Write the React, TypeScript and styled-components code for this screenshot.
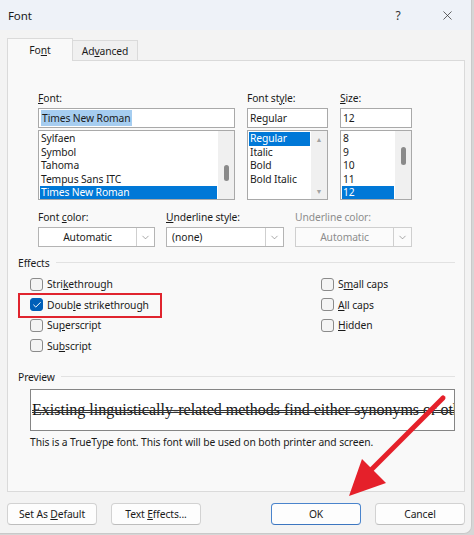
import React from 'react'
import styled, { createGlobalStyle, css } from 'styled-components'
import { X, ChevronDown, Check } from 'lucide-react'

const fontNames = ['Sylfaen', 'Symbol', 'Tahoma', 'Tempus Sans ITC', 'Times New Roman']
const fontStyles = ['Regular', 'Italic', 'Bold', 'Bold Italic']
const fontSizes = ['8', '9', '10', '11', '12']

const App = () => {
  return (
    <>
      <GlobalStyle />
      <StWindow>
        {/* // Title bar */}
        <StTitleBar>
          <StTitle>Font</StTitle>
          <StHelpButton>?</StHelpButton>
          <StCloseButton>
            <X size={15} strokeWidth={1.2} />
          </StCloseButton>
        </StTitleBar>

        {/* // Tabs */}
        <StTabStrip>
          <StTab $active>
            Fo<u>n</u>t
          </StTab>
          <StTab>
            Ad<u>v</u>anced
          </StTab>
        </StTabStrip>

        <StPanel>
          {/* // Font / style / size pickers */}
          <StPickerRow>
            <StColumn $width={197}>
              <StFieldLabel>
                <u>F</u>ont:
              </StFieldLabel>
              <StTextBox>
                <StSelection>Times New Roman</StSelection>
              </StTextBox>
              <StListBox>
                <StListItems>
                  {fontNames.map((name) => (
                    <StListItem key={name} $selected={name === 'Times New Roman'}>
                      {name}
                    </StListItem>
                  ))}
                </StListItems>
                <StScrollTrack>
                  <StThumb $offset={34} $length={16} />
                </StScrollTrack>
              </StListBox>
            </StColumn>

            <StColumn $width={81}>
              <StFieldLabel>
                Font st<u>y</u>le:
              </StFieldLabel>
              <StTextBox>Regular</StTextBox>
              <StListBox>
                <StListItems>
                  {fontStyles.map((name) => (
                    <StListItem key={name} $selected={name === 'Regular'}>
                      {name}
                    </StListItem>
                  ))}
                </StListItems>
                <StScrollTrack $arrows>
                  <StArrowGlyph>▲</StArrowGlyph>
                  <StArrowGlyph>▼</StArrowGlyph>
                </StScrollTrack>
              </StListBox>
            </StColumn>

            <StColumn $width={72}>
              <StFieldLabel>
                <u>S</u>ize:
              </StFieldLabel>
              <StTextBox>12</StTextBox>
              <StListBox>
                <StListItems>
                  {fontSizes.map((size) => (
                    <StListItem key={size} $selected={size === '12'}>
                      {size}
                    </StListItem>
                  ))}
                </StListItems>
                <StScrollTrack>
                  <StThumb $offset={16} $length={18} />
                </StScrollTrack>
              </StListBox>
            </StColumn>
          </StPickerRow>

          {/* // Colour / underline dropdowns */}
          <StDropdownRow>
            <StColumn $width={117}>
              <StFieldLabel>
                Font <u>c</u>olor:
              </StFieldLabel>
              <StDropdown>
                <StDropdownValue $center>Automatic</StDropdownValue>
                <StDropdownArrow>
                  <ChevronDown size={11} strokeWidth={1.3} />
                </StDropdownArrow>
              </StDropdown>
            </StColumn>
            <StColumn $width={118}>
              <StFieldLabel>
                <u>U</u>nderline style:
              </StFieldLabel>
              <StDropdown>
                <StDropdownValue>(none)</StDropdownValue>
                <StDropdownArrow>
                  <ChevronDown size={11} strokeWidth={1.3} />
                </StDropdownArrow>
              </StDropdown>
            </StColumn>
            <StColumn $width={117}>
              <StFieldLabel $disabled>Underline color:</StFieldLabel>
              <StDropdown $disabled>
                <StDropdownValue $center>Automatic</StDropdownValue>
                <StDropdownArrow>
                  <ChevronDown size={11} strokeWidth={1.3} />
                </StDropdownArrow>
              </StDropdown>
            </StColumn>
          </StDropdownRow>

          {/* // Effects */}
          <StGroupHeader>
            Effects
            <StGroupRule />
          </StGroupHeader>
          <StEffectsBody>
            <StEffectsColumn $width={291}>
              <StCheckRow>
                <StCheckBox />
                <span>
                  Stri<u>k</u>ethrough
                </span>
              </StCheckRow>
              <StCheckRow $marked>
                <StCheckBox $checked>
                  <Check size={10} strokeWidth={2.4} color="#ffffff" />
                </StCheckBox>
                <span>
                  Doub<u>l</u>e strikethrough
                </span>
              </StCheckRow>
              <StCheckRow>
                <StCheckBox />
                <span>
                  Su<u>p</u>erscript
                </span>
              </StCheckRow>
              <StCheckRow>
                <StCheckBox />
                <span>
                  Su<u>b</u>script
                </span>
              </StCheckRow>
            </StEffectsColumn>
            <StEffectsColumn>
              <StCheckRow>
                <StCheckBox />
                <span>
                  S<u>m</u>all caps
                </span>
              </StCheckRow>
              <StCheckRow>
                <StCheckBox />
                <span>
                  <u>A</u>ll caps
                </span>
              </StCheckRow>
              <StCheckRow>
                <StCheckBox />
                <span>
                  <u>H</u>idden
                </span>
              </StCheckRow>
            </StEffectsColumn>
          </StEffectsBody>

          {/* // Preview */}
          <StGroupHeader $spaced>
            Preview
            <StGroupRule />
          </StGroupHeader>
          <StPreviewBox>
            <StPreviewText>
              Existing linguistically-related methods find either synonyms or other related words
            </StPreviewText>
          </StPreviewBox>
          <StInfoText>
            This is a TrueType font. This font will be used on both printer and screen.
          </StInfoText>
        </StPanel>

        {/* // Buttons */}
        <StButtonBar>
          <StDialogButton>
            Set As <u>D</u>efault
          </StDialogButton>
          <StDialogButton>
            Text <u>E</u>ffects...
          </StDialogButton>
          <StSpacer />
          <StDialogButton $primary>OK</StDialogButton>
          <StDialogButton>Cancel</StDialogButton>
        </StButtonBar>

        {/* // Annotation arrow */}
        <StArrowOverlay viewBox="0 0 474 535" width={474} height={535}>
          <line x1={443} y1={398} x2={372} y2={469} stroke="#e5202a" strokeWidth={5} strokeLinecap="round" />
          <polygon points="349,496 362,459 386,483" fill="#e5202a" />
        </StArrowOverlay>
      </StWindow>
    </>
  )
}

const GlobalStyle = createGlobalStyle`
  html, body {
    margin: 0;
    padding: 0;
    background: #d6d6d6;
  }
  body {
    font-family: "Noto Sans", "Open Sans", sans-serif;
    font-size: 10.3px;
    letter-spacing: -0.1px;
    color: #1b1b1b;
  }
  u {
    text-underline-offset: 1px;
  }
`

// Window
const StWindow = styled.div`
  position: relative;
  width: 471px;
  height: 533px;
  background: #f3f3f3;
  border-right: 1px solid #c9c9c9;
  border-bottom: 1px solid #c9c9c9;
  border-bottom-right-radius: 8px;
  overflow: hidden;
`

// Title bar
const StTitleBar = styled.div`
  display: flex;
  align-items: center;
  height: 30px;
  padding-left: 8px;
  background: #eef2f8;
`
const StTitle = styled.span`
  flex: 1;
  font-size: 11.5px;
  color: #1a1a1a;
`
const StHelpButton = styled.div`
  width: 40px;
  margin-right: 5px;
  text-align: center;
  font-size: 12px;
  color: #333;
`
const StCloseButton = styled.div`
  display: flex;
  align-items: center;
  justify-content: center;
  width: 48px;
  height: 30px;
  color: #333;
`

// Tabs
const StTabStrip = styled.div`
  display: flex;
  align-items: flex-end;
  height: 22px;
  margin-top: 8px;
  padding-left: 7px;
`
const StTab = styled.div<{ $active?: boolean }>`
  position: relative;
  display: flex;
  align-items: center;
  justify-content: center;
  box-sizing: border-box;
  border: 1px solid #dadada;
  border-bottom: none;
  ${({ $active }) =>
    $active
      ? css`
          width: 66px;
          height: 23px;
          margin-bottom: -1px;
          background: #f9f9f9;
          z-index: 1;
        `
      : css`
          width: 65px;
          height: 20px;
          border-left: none;
          background: #f0f0f0;
        `}
`

// Panel
const StPanel = styled.div`
  box-sizing: border-box;
  width: 458px;
  height: 432px;
  margin-left: 7px;
  padding-top: 30px;
  background: #f9f9f9;
  border: 1px solid #dadada;
`

// Pickers
const StPickerRow = styled.div`
  display: flex;
  gap: 12px;
  padding-left: 30px;
`
const StColumn = styled.div<{ $width: number }>`
  display: flex;
  flex-direction: column;
  width: ${({ $width }) => $width}px;
`
const StFieldLabel = styled.div<{ $disabled?: boolean }>`
  height: 16px;
  line-height: 15px;
  margin-bottom: 1px;
  color: ${({ $disabled }) => ($disabled ? '#8d8d8d' : '#1b1b1b')};
`
const StTextBox = styled.div`
  box-sizing: border-box;
  height: 20px;
  margin-bottom: 2px;
  padding-left: 2px;
  line-height: 18px;
  background: #ffffff;
  border: 1px solid #a9a9a9;
`
const StSelection = styled.span`
  padding: 1px 1px;
  background: #a6cdf0;
`
const StListBox = styled.div`
  display: flex;
  box-sizing: border-box;
  height: 70px;
  background: #ffffff;
  border: 1px solid #a9a9a9;
  overflow: hidden;
`
const StListItems = styled.div`
  flex: 1;
  padding: 1px 1px 0;
`
const StListItem = styled.div<{ $selected?: boolean }>`
  height: 13.5px;
  line-height: 13.5px;
  padding-left: 1px;
  white-space: nowrap;
  ${({ $selected }) =>
    $selected &&
    css`
      background: #0078d7;
      color: #ffffff;
    `}
`
const StScrollTrack = styled.div<{ $arrows?: boolean }>`
  display: flex;
  flex-direction: column;
  align-items: center;
  justify-content: ${({ $arrows }) => ($arrows ? 'space-between' : 'flex-start')};
  width: 16px;
  padding: ${({ $arrows }) => ($arrows ? '5px 0 3px' : '0')};
  box-sizing: border-box;
  background: #f0f0f0;
`
const StThumb = styled.div<{ $offset: number; $length: number }>`
  width: 5px;
  height: ${({ $length }) => $length}px;
  margin-top: ${({ $offset }) => $offset}px;
  border-radius: 3px;
  background: #8a8a8a;
`
const StArrowGlyph = styled.span`
  font-size: 7px;
  line-height: 8px;
  color: #a3a3a3;
`

// Dropdowns
const StDropdownRow = styled.div`
  display: flex;
  gap: 11px;
  margin-top: 10px;
  padding-left: 30px;
`
const StDropdown = styled.div<{ $disabled?: boolean }>`
  display: flex;
  box-sizing: border-box;
  height: 20px;
  background: ${({ $disabled }) => ($disabled ? '#fbfbfb' : '#ffffff')};
  border: 1px solid ${({ $disabled }) => ($disabled ? '#cfcfcf' : '#b4b4b4')};
  color: ${({ $disabled }) => ($disabled ? '#8d8d8d' : '#1b1b1b')};
`
const StDropdownValue = styled.div<{ $center?: boolean }>`
  flex: 1;
  line-height: 18px;
  padding-left: ${({ $center }) => ($center ? '0' : '5px')};
  text-align: ${({ $center }) => ($center ? 'center' : 'left')};
`
const StDropdownArrow = styled.div`
  display: flex;
  align-items: center;
  justify-content: center;
  width: 17px;
  border-left: 1px solid #cfcfcf;
  color: #707070;
`

// Group sections
const StGroupHeader = styled.div<{ $spaced?: boolean }>`
  display: flex;
  align-items: center;
  gap: 6px;
  height: 15px;
  margin-top: ${({ $spaced }) => ($spaced ? '13px' : '8px')};
  padding: 0 9px 0 10px;
`
const StGroupRule = styled.div`
  flex: 1;
  height: 1px;
  background: #e2e2e2;
`
const StEffectsBody = styled.div`
  display: flex;
  margin-top: 4px;
  padding-left: 22px;
`
const StEffectsColumn = styled.div<{ $width?: number }>`
  display: flex;
  flex-direction: column;
  width: ${({ $width }) => ($width ? `${$width}px` : 'auto')};
`
const StCheckRow = styled.div<{ $marked?: boolean }>`
  position: relative;
  display: flex;
  align-items: center;
  gap: 4px;
  height: 20.5px;
  white-space: nowrap;
  ${({ $marked }) =>
    $marked &&
    css`
      &::after {
        content: '';
        position: absolute;
        left: -12px;
        top: -2px;
        width: 144px;
        height: 25px;
        box-sizing: border-box;
        border: 2px solid #e0242e;
      }
    `}
`
const StCheckBox = styled.div<{ $checked?: boolean }>`
  display: flex;
  align-items: center;
  justify-content: center;
  box-sizing: border-box;
  width: 13px;
  height: 13px;
  border-radius: 3px;
  ${({ $checked }) =>
    $checked
      ? css`
          background: #005fb8;
          border: 1px solid #005fb8;
        `
      : css`
          background: #f4f4f4;
          border: 1px solid #8b8b8b;
        `}
`

// Preview
const StPreviewBox = styled.div`
  display: flex;
  align-items: center;
  box-sizing: border-box;
  width: 425px;
  height: 42px;
  margin: 5px 0 0 22px;
  padding-left: 1px;
  background: #ffffff;
  border: 1px solid #858585;
  overflow: hidden;
`
const StPreviewText = styled.div`
  font-family: "Liberation Serif", "Times New Roman", serif;
  font-size: 16px;
  letter-spacing: 0;
  white-space: nowrap;
  color: #111111;
  text-decoration: line-through double;
  text-decoration-color: #333333;
`
const StInfoText = styled.div`
  margin: 4px 0 0 22px;
  line-height: 15px;
`

// Buttons
const StButtonBar = styled.div`
  display: flex;
  gap: 14px;
  width: 458px;
  margin: 11px 0 0 7px;
`
const StSpacer = styled.div`
  flex: 1;
`
const StDialogButton = styled.div<{ $primary?: boolean }>`
  box-sizing: border-box;
  width: 90px;
  height: 22px;
  line-height: 20px;
  text-align: center;
  background: #fdfdfd;
  border-radius: 4px;
  border: 1px solid ${({ $primary }) => ($primary ? '#4a84cc' : '#d2d2d2')};
  border-bottom-color: ${({ $primary }) => ($primary ? '#3c76c0' : '#bdbdbd')};
`

// Annotation
const StArrowOverlay = styled.svg`
  position: absolute;
  left: 0;
  top: 0;
  pointer-events: none;
`

export default App
